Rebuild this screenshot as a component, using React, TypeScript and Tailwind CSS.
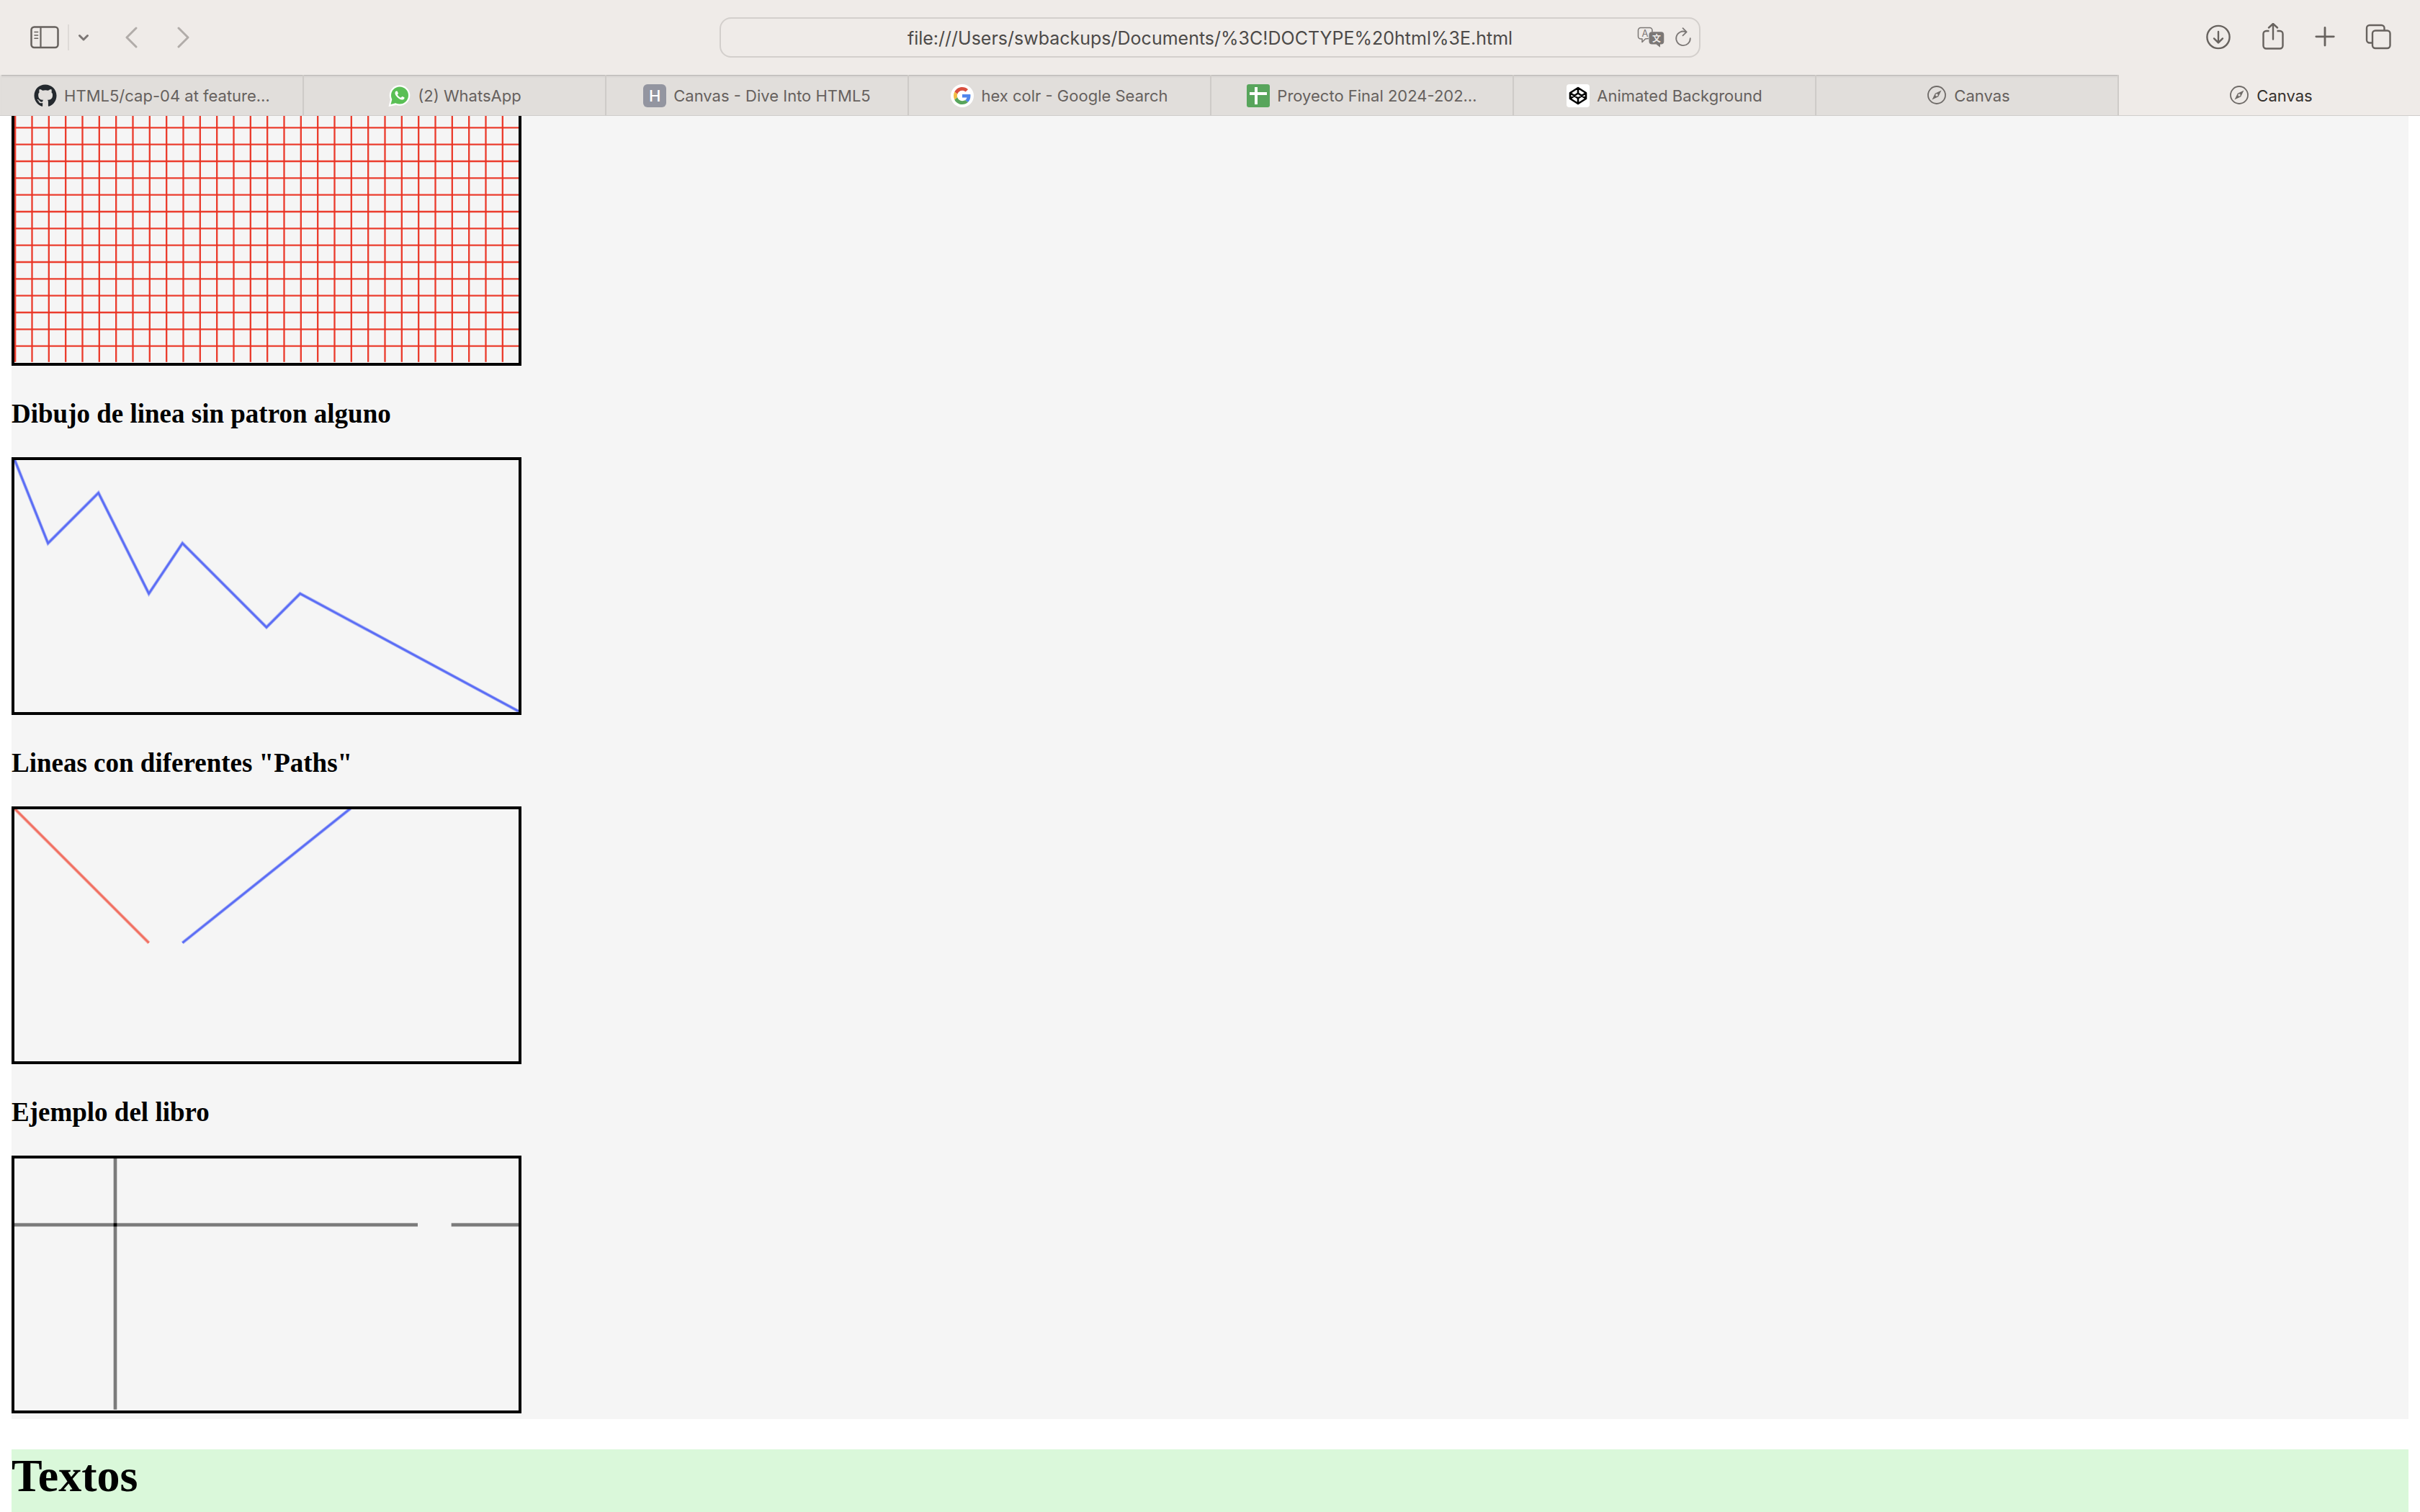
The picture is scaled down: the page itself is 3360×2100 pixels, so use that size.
import { useState } from "react";
import type { ReactNode } from "react";
import { FaGithub } from "react-icons/fa";

const ICON = "#67625e";

function SidebarIcon() {
  return (
    <svg width="40" height="32" viewBox="0 0 40 32" fill="none" stroke={ICON} strokeWidth="2.5" strokeLinecap="round">
      <rect x="1.5" y="1.5" width="37" height="28.5" rx="4" />
      <path d="M14.5 2v28" strokeWidth="2.2" strokeLinecap="butt" />
      <path d="M6 8.5h4.6M6 13h4.6M6 17.3h4.6" strokeWidth="1.6" />
    </svg>
  );
}

function Chevron({ d, width, height, color }: { d: string; width: number; height: number; color: string }) {
  return (
    <svg width={width} height={height} viewBox={`0 0 ${width} ${height}`} fill="none" stroke={color} strokeWidth="3" strokeLinecap="round" strokeLinejoin="round">
      <path d={d} />
    </svg>
  );
}

function DownloadIcon() {
  return (
    <svg width="36" height="40" viewBox="0 0 36 40" fill="none" stroke={ICON} strokeWidth="2.4" strokeLinecap="round" strokeLinejoin="round">
      <circle cx="18" cy="19.5" r="15.6" />
      <path d="M18 12v15M12 21.4l6 6 6-6" />
    </svg>
  );
}

function ShareIcon() {
  return (
    <svg width="32" height="40" viewBox="0 0 32 40" fill="none" stroke={ICON} strokeWidth="2.4" strokeLinecap="round" strokeLinejoin="round">
      <path d="M10.5 11H6.5a4 4 0 0 0-4 4v16.500a4 4 0 0 0 4 4h19a4 4 0 0 0 4-4V15a4 4 0 0 0-4-4h-4" strokeLinecap="butt" />
      <path d="M16 22.500V1.500M10 6.500l6-5.500 6 5.500" />
    </svg>
  );
}

function PlusIcon() {
  return (
    <svg width="28" height="40" viewBox="0 0 28 40" fill="none" stroke={ICON} strokeWidth="2.8" strokeLinecap="round">
      <path d="M14 6.500v24.500M1.800 18.800h24.500" />
    </svg>
  );
}

function TabsIcon() {
  return (
    <svg width="36" height="40" viewBox="0 0 36 40" fill="none" stroke={ICON} strokeWidth="2.400" strokeLinejoin="round">
      <path d="M10 27.500H6a4 4 0 0 1-4-4V7a4 4 0 0 1 4-4h16.500a4 4 0 0 1 4 4v4" />
      <rect x="10" y="10.500" width="24.500" height="24.500" rx="4" />
    </svg>
  );
}

function TranslateIcon() {
  return (
    <svg width="38" height="30" viewBox="0 0 38 30" fill="none">
      <path d="M16 16.500 11.500 17 7 21.500V17H5a3.500 3.500 0 0 1-3.500-3.500V5A3.500 3.500 0 0 1 5 1.500h12.500A3.500 3.500 0 0 1 21 5v2.500" stroke="#7b7775" strokeWidth="1.500" strokeLinejoin="round" />
      <path d="M20.500 7.300h12.800a4 4 0 0 1 4 4v9.200a4 4 0 0 1-4 4H32v4.300l-5.500-4.300h-6a4 4 0 0 1-4-4v-9.200a4 4 0 0 1 4-4z" fill="#7b7775" />
      <text x="11" y="13.500" textAnchor="middle" fontSize="13" fontFamily="Inter, sans-serif" fill="#7b7775">A</text>
      <text x="27" y="20.500" textAnchor="middle" fontSize="12" fontWeight="700" fontFamily="'Noto Sans CJK SC', sans-serif" fill="#efebe8">文</text>
    </svg>
  );
}

function ReloadIcon() {
  return (
    <svg width="24" height="30" viewBox="0 0 24 30" fill="none" stroke="#7b7775" strokeWidth="1.800" strokeLinecap="round" strokeLinejoin="round">
      <path d="M15.500 7.200A9.800 9.800 0 1 0 21.800 16.200" />
      <path d="M11.500 2.200l5.200 5.200-5.200 5" />
    </svg>
  );
}

function CompassIcon() {
  return (
    <svg width="32" height="32" viewBox="0 0 32 32" fill="none">
      <circle cx="18" cy="15" r="12" stroke="#6e6a67" strokeWidth="1.800" />
      <path d="M24.500 8.500l-4.300 8.700-8.700 4.300 4.300-8.700z" fill="#6e6a67" />
      <circle cx="18" cy="15" r="1.700" fill="#e6e3e0" />
    </svg>
  );
}

function WhatsAppIcon() {
  return (
    <svg width="32" height="32" viewBox="0 0 32 32">
      <circle cx="17" cy="15.500" r="14.300" fill="#fff" />
      <path d="M1.500 31 4 21l8 8z" fill="#fff" />
      <circle cx="17" cy="15.500" r="12" fill="#5abf55" />
      <path d="M4.500 28 6.500 20.500l5.500 5.500z" fill="#5abf55" />
      <g transform="translate(4 2.500) scale(1.080)">
        <path
          fill="#fff"
          d="M17.472 14.382c-.297-.149-1.758-.867-2.030-.967-.273-.099-.471-.148-.670.150-.197.297-.767.966-.940 1.164-.173.199-.347.223-.644.075-.297-.150-1.255-.463-2.390-1.475-.883-.788-1.480-1.761-1.653-2.059-.173-.297-.018-.458.130-.606.134-.133.298-.347.446-.520.149-.174.198-.298.298-.497.099-.198.050-.371-.025-.520-.075-.149-.669-1.612-.916-2.207-.242-.579-.487-.500-.669-.510-.173-.008-.371-.010-.570-.010-.198 0-.520.074-.792.372-.272.297-1.040 1.016-1.040 2.479 0 1.462 1.065 2.875 1.213 3.074.149.198 2.096 3.200 5.077 4.487.709.306 1.262.489 1.694.625.712.227 1.360.195 1.871.118.571-.085 1.758-.719 2.006-1.413.248-.694.248-1.289.173-1.413-.074-.124-.272-.198-.570-.347"
        />
      </g>
    </svg>
  );
}

function LetterIcon() {
  return (
    <span aria-hidden="true" className="flex size-8 items-center justify-center rounded-md bg-[#9395a0] text-[22px] leading-8 font-medium text-white">
      H
    </span>
  );
}

function GoogleIcon() {
  return (
    <svg width="32" height="32" viewBox="0 0 32 32">
      <circle cx="16" cy="16" r="16" fill="#fff" />
      <g transform="translate(4 4) scale(.5)">
        <path fill="#d95040" d="M24 9.500c3.540 0 6.710 1.220 9.210 3.600l6.850-6.850C35.900 2.380 30.470 0 24 0 14.620 0 6.510 5.380 2.560 13.220l7.980 6.190C12.430 13.720 17.740 9.500 24 9.500z" />
        <path fill="#5086ec" d="M46.980 24.550c0-1.570-.150-3.090-.380-4.550H24v9.020h12.940c-.580 2.960-2.260 5.480-4.780 7.180l7.730 6c4.510-4.180 7.090-10.360 7.090-17.650z" />
        <path fill="#f2bd42" d="M10.530 28.590c-.480-1.450-.760-2.990-.760-4.590s.270-3.140.760-4.590l-7.980-6.190C.920 16.460 0 20.120 0 24c0 3.880.920 7.540 2.560 10.780l7.970-6.190z" />
        <path fill="#58a55c" d="M24 48c6.480 0 11.930-2.130 15.890-5.810l-7.730-6c-2.150 1.450-4.920 2.300-8.160 2.300-6.260 0-11.570-4.220-13.470-9.910l-7.980 6.190C6.510 42.620 14.620 48 24 48z" />
      </g>
    </svg>
  );
}

function SheetsIcon() {
  return (
    <svg width="32" height="32" viewBox="0 0 32 32">
      <rect width="32" height="32" rx="3" fill="#58a55c" />
      <path d="M13 4v24M4 13h24" stroke="#fff" strokeWidth="4" />
    </svg>
  );
}

function CodePenIcon() {
  return (
    <svg width="32" height="32" viewBox="0 0 32 32">
      <rect width="32" height="32" rx="4" fill="#fff" />
      <path
        d="M16 5 27 12v8L16 27 5 20v-8zM16 5v7.500M16 19.500V27M5 12l11 7.500L27 12M5 20l11-7.500L27 20"
        fill="none"
        stroke="#000"
        strokeWidth="2.600"
        strokeLinejoin="round"
      />
    </svg>
  );
}

const TABS: { title: string; icon: ReactNode }[] = [
  { title: "HTML5/cap-04 at feature…", icon: <FaGithub size={32} color="#24292e" /> },
  { title: "(2) WhatsApp", icon: <WhatsAppIcon /> },
  { title: "Canvas - Dive Into HTML5", icon: <LetterIcon /> },
  { title: "hex colr - Google Search", icon: <GoogleIcon /> },
  { title: "Proyecto Final 2024-202…", icon: <SheetsIcon /> },
  { title: "Animated Background", icon: <CodePenIcon /> },
  { title: "Canvas", icon: <CompassIcon /> },
  { title: "Canvas", icon: <CompassIcon /> },
];

function Toolbar() {
  const [url, setUrl] = useState("file:///Users/swbackups/Documents/%3C!DOCTYPE%20html%3E.html");
  return (
    <div className="flex h-26 items-center justify-between">
      <div className="flex flex-1 items-center pl-10">
        <button type="button" aria-label="Show sidebar" className="flex size-11 items-center justify-center"><SidebarIcon /></button>
        <span className="ml-2.5 h-9 w-0.5 bg-[#dedad7]" />
        <button type="button" aria-label="Tab groups" className="ml-3 flex h-11 w-5 items-center">
          <Chevron d="M2.500 2.500 8 8l5.500-5.500" width={16} height={10} color="#7b7674" />
        </button>
        <button type="button" aria-label="Back" className="ml-11 flex h-11 w-8 items-center">
          <Chevron d="M17 2 4 15l13 13" width={20} height={30} color="#b1aca9" />
        </button>
        <button type="button" aria-label="Forward" className="ml-10 flex h-11 w-8 items-center">
          <Chevron d="M4 2l13 13L4 28" width={20} height={30} color="#b1aca9" />
        </button>
      </div>
      <form className="flex h-14 w-[1362px] max-w-[50%] items-center rounded-2xl border-2 border-[#d3cfcc] pl-[86px]" onSubmit={(e) => e.preventDefault()}>
        <input
          aria-label="Address"
          value={url}
          onChange={(e) => setUrl(e.target.value)}
          className="min-w-0 flex-1 bg-transparent pt-px text-center text-[25px] leading-8 text-[#4c4a48] outline-none"
        />
        <button type="button" aria-label="Translate"><TranslateIcon /></button>
        <button type="button" aria-label="Reload" className="mr-2.5 ml-3.5"><ReloadIcon /></button>
      </form>
      <div className="flex flex-1 items-center justify-end gap-[42px] pr-10">
        <button type="button" aria-label="Downloads"><DownloadIcon /></button>
        <button type="button" aria-label="Share"><ShareIcon /></button>
        <button type="button" aria-label="New tab"><PlusIcon /></button>
        <button type="button" aria-label="Tab overview"><TabsIcon /></button>
      </div>
    </div>
  );
}

function TabBar() {
  const active = TABS.length - 1;
  return (
    <div role="tablist" className="grid h-14 grid-cols-8">
      {TABS.map((tab, i) => (
        <button
          key={i}
          type="button"
          role="tab"
          aria-selected={i === active}
          className={
            "flex min-w-0 items-center justify-center gap-2.5 border-l-2 pt-0.5 text-[22px] leading-7 " +
            (i === 0 ? "border-[#e1dedb] " : "border-[#cecbc8] ") +
            (i === active
              ? "text-[#35312e]"
              : "bg-[#e1dedb] text-[#66615e] shadow-[inset_0_1px_0_#bbb8b6,inset_0_4px_3px_-2px_#cbc8c5]")
          }
        >
          {tab.icon}
          <span className="truncate">{tab.title}</span>
        </button>
      ))}
    </div>
  );
}

/* A 300 by 150 drawing shown at 700 by 350, inside a black frame. */
function Drawing({ label, children }: { label: string; children: ReactNode }) {
  return (
    <svg role="img" aria-label={label} viewBox="0 0.500 300 150" fill="none" className="block h-[358px] w-[708px] border-4 border-black">
      {children}
    </svg>
  );
}

/* Diagonal strokes carry a pale edge around a saturated core. */
function SoftLine({ d, color }: { d: string; color: string }) {
  return (
    <g stroke={color}>
      <path d={d} strokeWidth="2" strokeOpacity=".3" />
      <path d={d} strokeWidth="1.200" strokeOpacity=".6" />
    </g>
  );
}

function Heading({ children }: { children: ReactNode }) {
  return <h3 className="mt-[45px] mb-[39px] text-[37px] leading-[43px] font-bold">{children}</h3>;
}

const COLUMNS = Array.from({ length: 30 }, (_, i) => i * 10 + 0.5);
const ROWS = Array.from({ length: 15 }, (_, i) => i * 10 + 0.5);

export default function App() {
  return (
    <div className="flex h-screen flex-col overflow-hidden bg-white font-['Inter','Liberation_Sans',sans-serif]">
      <header className="shrink-0 border-b border-[#cfcdcb] bg-[#efebe8]">
        <Toolbar />
        <TabBar />
      </header>
      <main className="min-h-0 flex-1 overflow-hidden px-4 font-['Liberation_Serif',serif] text-black">
        <section className="-mt-[11px] bg-[#f5f5f5] pb-2">
          <Drawing label="Cuadricula">
            <g stroke="#ea3323" strokeOpacity=".95">
              {COLUMNS.map((x) => <path key={x} d={`M${x} 0V150`} />)}
              {ROWS.map((y) => <path key={y} d={`M0 ${y}H300`} />)}
            </g>
          </Drawing>
          <Heading>Dibujo de linea sin patron alguno</Heading>
          <Drawing label="Linea">
            <SoftLine d="M0 0 20 50 50 20 80 80 100 50 150 100 170 80 300 150" color="#1f38f5" />
          </Drawing>
          <Heading>Lineas con diferentes "Paths"</Heading>
          <Drawing label="Paths">
            <SoftLine d="M0 0 80 80" color="#f03a28" />
            <SoftLine d="M100 80 200 0" color="#1f38f5" />
          </Drawing>
          <Heading>Ejemplo del libro</Heading>
          <Drawing label="Ejes">
            <path d="M0 40H240M260 40H300M60 0V150" stroke="#7b7b7b" strokeWidth="2" />
            <path d="M59 40h2" stroke="#000" strokeWidth="2" />
          </Drawing>
        </section>
        <section className="mt-[42px] bg-[#daf8da] pb-10">
          <h1 className="text-[64px] leading-[74px] font-bold">Textos</h1>
        </section>
      </main>
    </div>
  );
}
